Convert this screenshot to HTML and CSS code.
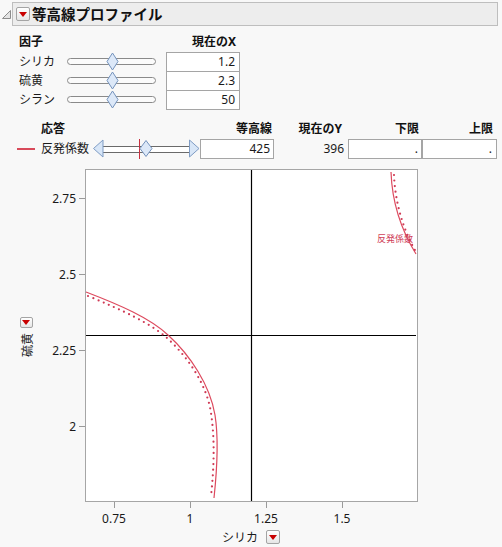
FILE: index.html
```html
<!DOCTYPE html>
<html lang="ja">
<head>
<meta charset="utf-8">
<title>等高線プロファイル</title>
<link rel="stylesheet" href="styles.css">
</head>
<body>
<div class="header">
  <svg class="disclosure" width="12" height="24" viewBox="0 0 12 24"><polygon points="2.5,16.5 10.5,16.5 10.5,8.5" fill="#e4e4e4" stroke="#8c8c8c" stroke-width="1"/></svg>
  <div class="bar">
    <span class="menu-btn"><svg width="8" height="5" viewBox="0 0 8 5"><polygon points="0,0 8,0 4,5" fill="#c80000"/></svg></span>
    <span class="title">等高線プロファイル</span>
  </div>
</div>

<div class="factors">
  <div class="hdr">因子</div>
  <div></div>
  <div class="hdr right">現在のX</div>

  <div class="lbl">シリカ</div>
  <div class="slider"><svg width="89" height="19" viewBox="0 0 89 19"><rect x="0.5" y="6.5" width="88" height="6" rx="3" fill="#fbfbfb" stroke="#8a8a8a"/><polygon points="45.5,1 51,9.5 45.5,18 40,9.5" fill="#dce8f8" stroke="#7493bd"/></svg></div>
  <div class="box">1.2</div>

  <div class="lbl">硫黄</div>
  <div class="slider"><svg width="89" height="19" viewBox="0 0 89 19"><rect x="0.5" y="6.5" width="88" height="6" rx="3" fill="#fbfbfb" stroke="#8a8a8a"/><polygon points="45.5,1 51,9.5 45.5,18 40,9.5" fill="#dce8f8" stroke="#7493bd"/></svg></div>
  <div class="box">2.3</div>

  <div class="lbl">シラン</div>
  <div class="slider"><svg width="89" height="19" viewBox="0 0 89 19"><rect x="0.5" y="6.5" width="88" height="6" rx="3" fill="#fbfbfb" stroke="#8a8a8a"/><polygon points="45.5,1 51,9.5 45.5,18 40,9.5" fill="#dce8f8" stroke="#7493bd"/></svg></div>
  <div class="box">50</div>
</div>

<div class="responses">
  <div></div>
  <div class="hdr">応答</div>
  <div></div>
  <div class="hdr right pr2">等高線</div>
  <div class="hdr right pr6">現在のY</div>
  <div class="hdr right pr3">下限</div>
  <div class="hdr right pr4">上限</div>

  <div class="swatch"><span class="line"></span></div>
  <div class="lbl">反発係数</div>
  <div class="rslider"><svg width="107" height="20" viewBox="0 0 107 20">
    <rect x="10" y="7" width="86" height="6" fill="#ffffff"/>
    <line x1="10" y1="7.5" x2="96" y2="7.5" stroke="#6a6a6a"/>
    <line x1="10" y1="13.5" x2="96" y2="13.5" stroke="#6a6a6a"/>
    <polygon points="0.5,9.5 10,1 10,18" fill="#d8e6f7" stroke="#7f9cc4"/>
    <polygon points="96.5,1 96.5,18 106,9.5" fill="#d8e6f7" stroke="#7f9cc4"/>
    <line x1="46.5" y1="0" x2="46.5" y2="20" stroke="#c8303f"/>
    <polygon points="53,1.5 59,9.5 53,17.5 47,9.5" fill="#dce8f8" stroke="#7493bd"/>
  </svg></div>
  <div class="box">425</div>
  <div class="val">396</div>
  <div class="box">.</div>
  <div class="box wide">.</div>
</div>

<div class="plot">
  <div class="ylab">
    <span class="menu-btn small"><svg width="8" height="5" viewBox="0 0 8 5"><polygon points="0,0 8,0 4,5" fill="#c80000"/></svg></span>
    <span class="vtext">硫黄</span>
  </div>
  <svg class="chart" width="380" height="362" viewBox="40 165 380 362">
    <rect x="85.5" y="169.5" width="332" height="332" fill="#ffffff" stroke="#a6a6a6"/>
    <g stroke="#9a9a9a">
      <line x1="79" y1="198.5" x2="85" y2="198.5"/>
      <line x1="79" y1="274.5" x2="85" y2="274.5"/>
      <line x1="79" y1="350.5" x2="85" y2="350.5"/>
      <line x1="79" y1="426.5" x2="85" y2="426.5"/>
      <line x1="114.5" y1="502" x2="114.5" y2="508"/>
      <line x1="190.5" y1="502" x2="190.5" y2="508"/>
      <line x1="266.5" y1="502" x2="266.5" y2="508"/>
      <line x1="342.5" y1="502" x2="342.5" y2="508"/>
    </g>
    <g class="ticklbl" text-anchor="end">
      <text x="76" y="198">2.75</text>
      <text x="76" y="274">2.5</text>
      <text x="76" y="350">2.25</text>
      <text x="76" y="426">2</text>
    </g>
    <g class="ticklbl" text-anchor="middle">
      <text x="114" y="518">0.75</text>
      <text x="190" y="518">1</text>
      <text x="266" y="518">1.25</text>
      <text x="342" y="518">1.5</text>
    </g>
    <line x1="251.5" y1="170" x2="251.5" y2="501" stroke="#000" stroke-width="1.2"/>
    <line x1="86" y1="335.5" x2="416" y2="335.5" stroke="#000" stroke-width="1.2"/>
    <path d="M86,292 C120,305 150,318 168,335 C190,355 210,385 215,415 C219,440 217,470 214,498" fill="none" stroke="#dd4a5e" stroke-width="1.2"/>
    <path d="M88,296 C122,310 150,323 167,338 C188,357 207,385 211,413 C215,440 214,468 211,496" fill="none" stroke="#cf3a55" stroke-width="2.2" stroke-dasharray="0 5.6" stroke-linecap="round"/>
    <path d="M391,172 C392,200 400,228 416,254" fill="none" stroke="#dd4a5e" stroke-width="1.2"/>
    <path d="M394,175 C395,200 402,228 416,252" fill="none" stroke="#cf3a55" stroke-width="2.2" stroke-dasharray="0 5.6" stroke-linecap="round"/>
    <text class="curvelbl" x="377" y="238">反発係数</text>
  </svg>
</div>
<div class="xlab">
  <span>シリカ</span>
  <span class="menu-btn"><svg width="8" height="5" viewBox="0 0 8 5"><polygon points="0,0 8,0 4,5" fill="#c80000"/></svg></span>
</div>
</body>
</html>
```
FILE: styles.css
```css
* { box-sizing: border-box; }
html, body { margin: 0; padding: 0; }
body {
  background: #f8f8f8;
  font-family: "Noto Sans", "Noto Sans CJK JP", sans-serif;
  font-size: 12px;
  color: #1a1a1a;
  width: 502px;
  height: 547px;
  overflow: hidden;
}
.header {
  display: flex;
  align-items: flex-start;
  padding-top: 2px;
  height: 26px;
}
.disclosure { display: block; flex: none; }
.bar {
  width: 486px;
  height: 24px;
  background: #ededed;
  border: 1px solid #bebebe;
  display: flex;
  align-items: center;
  padding-left: 3px;
  gap: 2px;
}
.menu-btn {
  width: 14px;
  height: 14px;
  border: 1px solid #a4a4a4;
  border-radius: 2px;
  background: linear-gradient(#ffffff, #e6e6e6);
  display: inline-flex;
  align-items: center;
  justify-content: center;
  flex: none;
}
.menu-btn svg { display: block; }
.menu-btn.small { width: 13px; height: 11px; }
.title {
  font-weight: bold;
  font-size: 14.5px;
  line-height: 1;
  color: #111;
  font-family: "Noto Sans CJK JP", sans-serif;
}
.factors {
  display: grid;
  grid-template-columns: 48px 99px 74px;
  grid-template-rows: 20px repeat(3, 19px);
  margin: 6px 0 0 19px;
  width: 221px;
}
.hdr {
  font-weight: bold;
  align-self: center;
  line-height: 16px;
  color: #111;
}
.right { text-align: right; padding-right: 4px; }
.pr2 { padding-right: 2px; }
.pr3 { padding-right: 3px; }
.pr4 { padding-right: 4px; }
.pr6 { padding-right: 6px; }
.lbl {
  align-self: center;
  line-height: 16px;
  white-space: nowrap;
}
.slider { align-self: start; height: 19px; }
.slider svg, .rslider svg { display: block; }
.box {
  align-self: start;
  height: 20px;
  border: 1px solid #a5a5a5;
  background: #ffffff;
  text-align: right;
  padding-right: 4px;
  line-height: 18px;
}
.responses {
  display: grid;
  grid-template-columns: 24px 52px 107px 74px 74px 74px 75px;
  grid-template-rows: 20px 20px;
  margin: 10px 0 0 17px;
  width: 480px;
}
.responses .box { padding-right: 3px; }
.responses .box.wide { padding-right: 4px; }
.swatch { display: flex; align-items: center; }
.swatch .line { display: block; width: 18px; height: 2px; background: #d84a5a; }
.rslider { height: 20px; }
.val {
  align-self: center;
  text-align: right;
  padding-right: 4px;
  line-height: 16px;
}
.plot {
  display: flex;
  margin-top: 6px;
  height: 362px;
}
.ylab {
  width: 40px;
  display: flex;
  flex-direction: column;
  align-items: center;
  padding-top: 152px;
  padding-left: 12px;
  gap: 5px;
}
.vtext {
  writing-mode: vertical-rl;
  text-orientation: sideways;
  transform: rotate(180deg);
  font-family: "Noto Sans CJK JP", sans-serif;
  line-height: 13px;
}
.chart { display: block; }
.ticklbl text {
  font-family: "Noto Sans", "Noto Sans CJK JP", sans-serif;
  font-size: 12px;
  fill: #1a1a1a;
  dominant-baseline: central;
}
.curvelbl {
  font-family: "Noto Sans CJK JP", sans-serif;
  font-size: 9px;
  fill: #d04058;
  dominant-baseline: central;
}
.xlab {
  display: flex;
  align-items: center;
  justify-content: center;
  gap: 8px;
  margin-left: 85px;
  width: 332px;
  height: 20px;
}
```
